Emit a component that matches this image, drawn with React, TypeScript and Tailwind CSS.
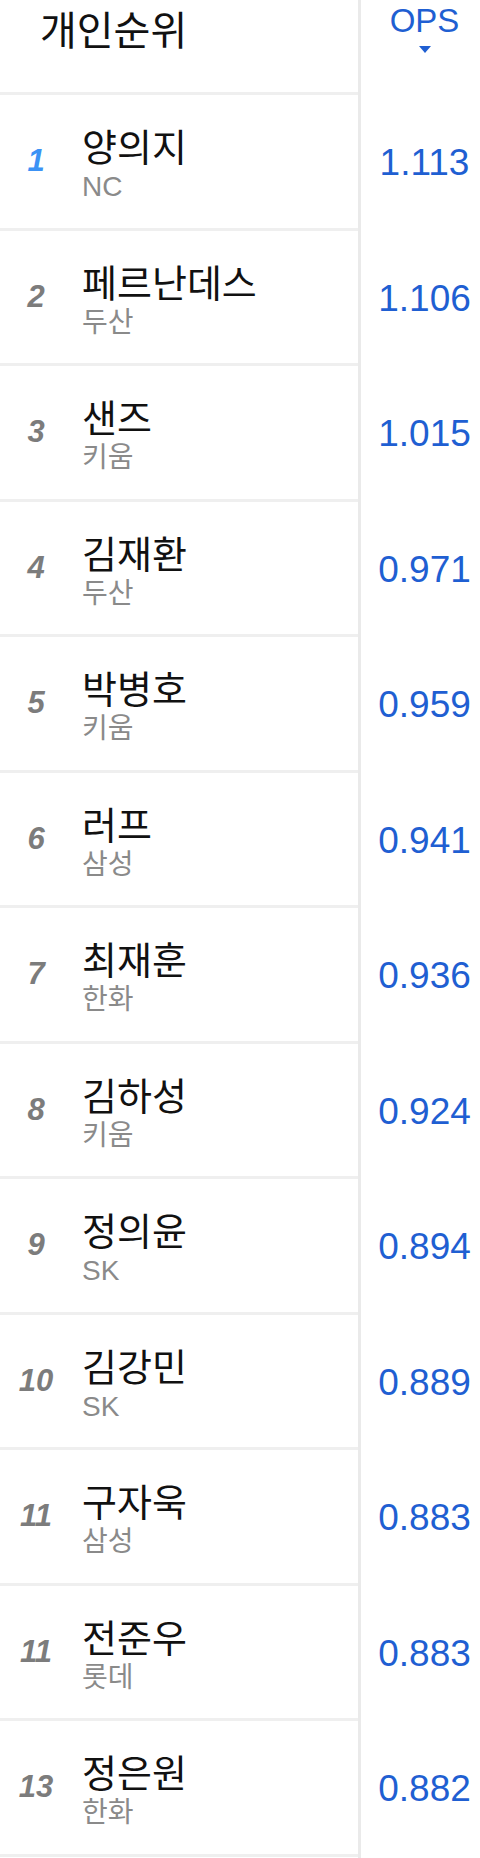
type Player = {
  rank: number
  name: string
  team: string
  ops: string
}

const players: Player[] = [
  { rank: 1, name: '양의지', team: 'NC', ops: '1.113' },
  { rank: 2, name: '페르난데스', team: '두산', ops: '1.106' },
  { rank: 3, name: '샌즈', team: '키움', ops: '1.015' },
  { rank: 4, name: '김재환', team: '두산', ops: '0.971' },
  { rank: 5, name: '박병호', team: '키움', ops: '0.959' },
  { rank: 6, name: '러프', team: '삼성', ops: '0.941' },
  { rank: 7, name: '최재훈', team: '한화', ops: '0.936' },
  { rank: 8, name: '김하성', team: '키움', ops: '0.924' },
  { rank: 9, name: '정의윤', team: 'SK', ops: '0.894' },
  { rank: 10, name: '김강민', team: 'SK', ops: '0.889' },
  { rank: 11, name: '구자욱', team: '삼성', ops: '0.883' },
  { rank: 11, name: '전준우', team: '롯데', ops: '0.883' },
  { rank: 13, name: '정은원', team: '한화', ops: '0.882' },
]

function Row({ p, i }: { p: Player; i: number }) {
  return (
    <div className={`flex ${i % 2 === 0 ? 'h-[136px]' : 'h-[135px]'}`}>
      <div className="flex w-[358px] items-center border-b-[3px] border-[#efefef]">
        <div
          className={`w-[74px] pr-[2px] text-center text-[31px] font-bold italic ${p.rank === 1 ? 'text-[#3c92f5]' : 'text-[#7c7c7c]'}`}
        >
          {p.rank}
        </div>
        <div className="flex flex-col pl-[8px] pt-[5px]">
          <span className="text-[38px] leading-[44px] text-[#111111]">{p.name}</span>
          <span className="mt-[2px] text-[28px] leading-[30px] text-[#8a8a8a]">{p.team}</span>
        </div>
      </div>
      <div className="flex flex-1 items-center justify-center border-l-[3px] border-[#eaeaea] pl-[8px]">
        <span className="text-[37px] text-[#1f5fd2]">{p.ops}</span>
      </div>
    </div>
  )
}

export default function App() {
  return (
    <div
      className="min-h-[1858px] w-[480px] bg-white"
      style={{ fontFamily: '"Liberation Sans", "Noto Sans CJK KR", sans-serif' }}
    >
      <div className="flex h-[95px]">
        <div className="w-[358px] border-b-[3px] border-[#efefef] pl-[40px] pt-[5px]">
          <span className="text-[40px] leading-[52px] text-[#111111]">개인순위</span>
        </div>
        <div className="flex flex-1 flex-col items-center border-l-[3px] border-[#eaeaea] pl-[8px] pt-[4px]">
          <span className="text-[33px] leading-[33px] text-[#1f5fd2]">OPS</span>
          <svg width="12" height="7" viewBox="0 0 12 7" className="mt-[9px]">
            <path d="M0 0 L12 0 L6 7 Z" fill="#1f5fd2" />
          </svg>
        </div>
      </div>
      {players.map((p, i) => (
        <Row key={i} p={p} i={i} />
      ))}
      <div className="flex h-[1px]">
        <div className="w-[358px]" />
        <div className="flex-1 border-l-[3px] border-[#eaeaea]" />
      </div>
    </div>
  )
}
